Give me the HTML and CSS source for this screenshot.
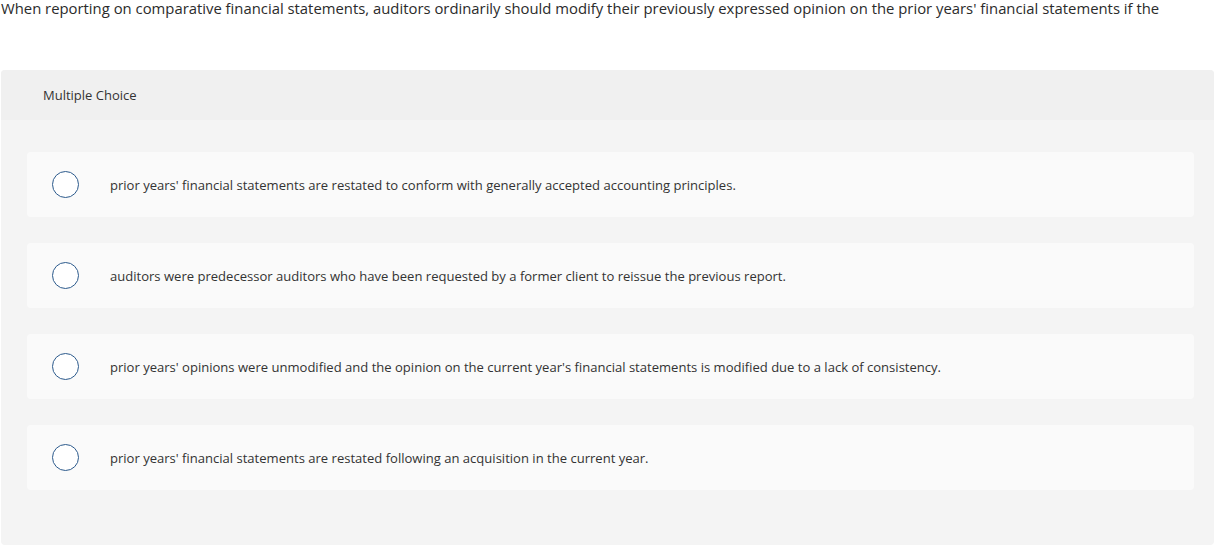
FILE: index.html
```html
<!DOCTYPE html>
<html>
<head>
<meta charset="utf-8">
<link rel="stylesheet" href="styles.css">
</head>
<body>
<p class="question">When reporting on comparative financial statements, auditors ordinarily should modify their previously expressed opinion on the prior years' financial statements if the</p>
<div class="panel">
  <div class="panel-head">Multiple Choice</div>
  <div class="panel-body">
    <label class="option"><span class="radio"></span><span class="opt-text">prior years' financial statements are restated to conform with generally accepted accounting principles.</span></label>
    <label class="option"><span class="radio"></span><span class="opt-text">auditors were predecessor auditors who have been requested by a former client to reissue the previous report.</span></label>
    <label class="option"><span class="radio"></span><span class="opt-text">prior years' opinions were unmodified and the opinion on the current year's financial statements is modified due to a lack of consistency.</span></label>
    <label class="option"><span class="radio"></span><span class="opt-text">prior years' financial statements are restated following an acquisition in the current year.</span></label>
  </div>
</div>
</body>
</html>
```
FILE: styles.css
```css
html, body {
  margin: 0;
  padding: 0;
  background: #ffffff;
}
body {
  font-family: "Open Sans", "Liberation Sans", sans-serif;
  color: #333333;
}
.question {
  margin: 0;
  padding: 0 0 0 1px;
  font-size: 14.85px;
  line-height: 16px;
  height: 70px;
  color: #2b2b2b;
}
.panel {
  margin-left: 1px;
  background: #f4f4f4;
  border-radius: 4px;
  height: 475px;
  overflow: hidden;
}
.panel-head {
  background: #f0f0f0;
  height: 50px;
  display: flex;
  align-items: center;
  padding-left: 42px;
  font-size: 13px;
  color: #333;
}
.panel-body {
  padding: 32px 20px 0 26px;
  display: flex;
  flex-direction: column;
  gap: 26px;
}
.option {
  display: flex;
  align-items: center;
  height: 65px;
  background: #fafafa;
  border-radius: 4px;
  padding-left: 25px;
}
.radio {
  width: 25px;
  height: 25px;
  border: 1.5px solid #2c5a8c;
  border-radius: 50%;
  background: #ffffff;
  flex: none;
}
.opt-text {
  margin-left: 31px;
  margin-top: 1px;
  font-size: 13.05px;
  color: #333;
}
```
